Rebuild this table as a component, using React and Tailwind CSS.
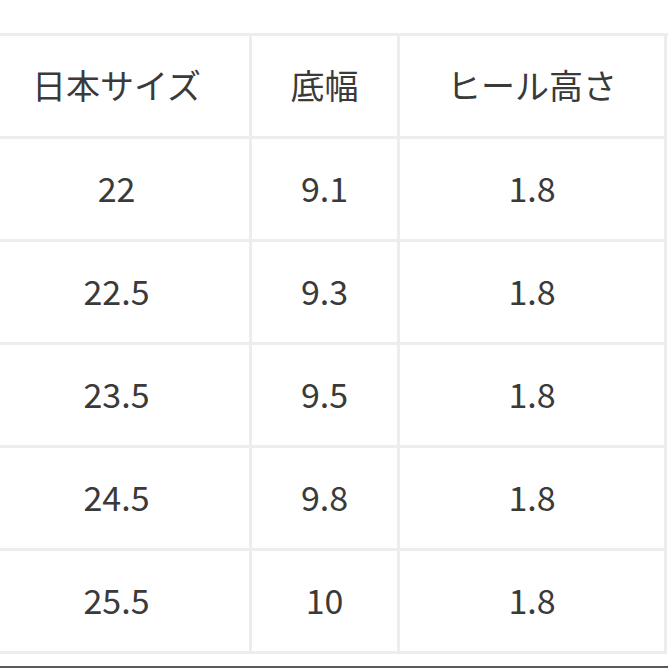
const HEAD = ['日本サイズ', '底幅', 'ヒール高さ'];

const ROWS = [
  ['22', '9.1', '1.8'],
  ['22.5', '9.3', '1.8'],
  ['23.5', '9.5', '1.8'],
  ['24.5', '9.8', '1.8'],
  ['25.5', '10', '1.8'],
];

const cell = 'flex items-center justify-center h-[103px] pb-[4px] border-r-[3px] border-b-[3px] border-[#ededed]';

export default function App() {
  return (
    <div
      className="w-[668px] h-[668px] bg-white overflow-hidden relative text-[#3a3a3a]"
      style={{ fontFamily: "'Noto Sans CJK JP', 'Noto Sans', sans-serif" }}
    >
      <div className="pt-[33px] ml-[-16px]">
        <div className="grid grid-cols-[268px_148px_267px] border-t-[3px] border-[#ededed] text-[34px]">
          {HEAD.map(h => (
            <div key={h} className={cell}>{h}</div>
          ))}
          {ROWS.map((r, i) =>
            r.map((v, j) => (
              <div key={`${i}-${j}`} className={cell}>{v}</div>
            ))
          )}
        </div>
      </div>
      <div className="absolute left-0 right-0 bottom-0 h-[2px] bg-[#5a5a5a]" />
    </div>
  );
}
